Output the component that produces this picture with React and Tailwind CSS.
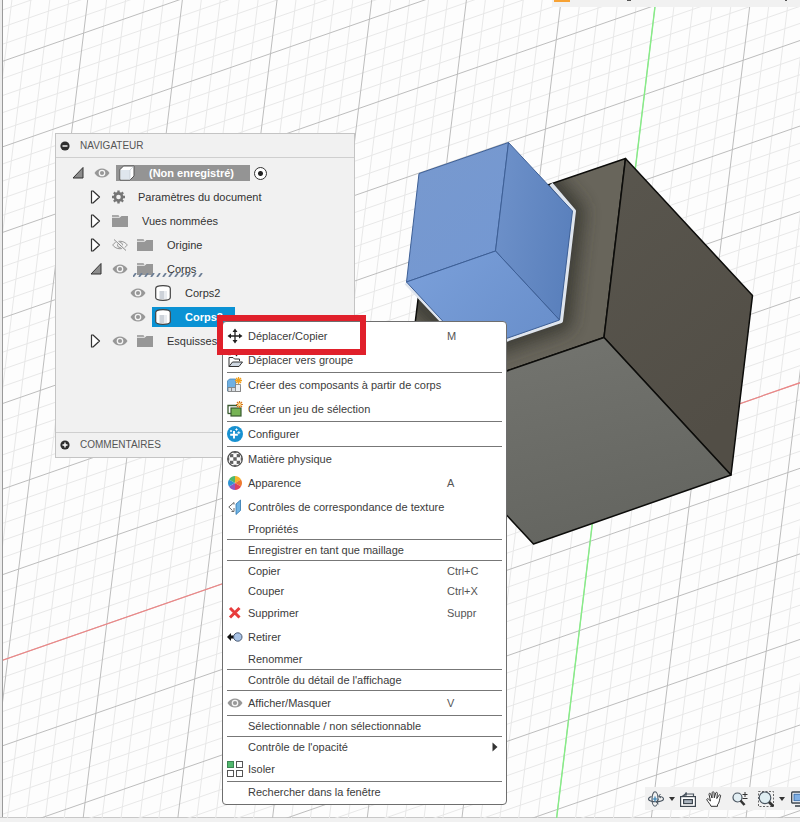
import React, { useState } from "react";

// Ground grid: origin plus the two directions of one large cell
const ORIGIN = [601, 452];
const U = [98.86, -34.4];
const V = [-10.83, 89.33];

const gridPoint = (a, b) => [
  ORIGIN[0] + a * U[0] + b * V[0],
  ORIGIN[1] + a * U[1] + b * V[1],
];

const gridLines = () => {
  const lines = [];
  for (let i = -100; i <= 100; i++) {
    const major = i % 5 === 0;
    const k = i / 5;
    lines.push({ key: `v${i}`, from: gridPoint(k, -20), to: gridPoint(k, 20), major });
    lines.push({ key: `u${i}`, from: gridPoint(-20, k), to: gridPoint(20, k), major });
  }
  return lines.sort((a, b) => a.major - b.major);
};

const Line = ({ from, to, ...rest }) => (
  <line x1={from[0]} y1={from[1]} x2={to[0]} y2={to[1]} {...rest} />
);

const Viewport = () => (
  <svg className="absolute inset-0 h-full w-full" aria-hidden="true">
    <defs>
      <linearGradient id="rightFace" x1="0" y1="0" x2="0.4" y2="1">
        <stop offset="0" stopColor="#59564e" />
        <stop offset="1" stopColor="#524e46" />
      </linearGradient>
      <linearGradient id="bottomFace" x1="0" y1="0" x2="0.4" y2="1">
        <stop offset="0" stopColor="#757671" />
        <stop offset="1" stopColor="#656661" />
      </linearGradient>
      <linearGradient id="blueLeft" x1="0" y1="0" x2="0.6" y2="1">
        <stop offset="0" stopColor="#7899ce" />
        <stop offset="1" stopColor="#7498d2" />
      </linearGradient>
      <linearGradient id="blueRight" x1="0" y1="0" x2="1" y2="0.3">
        <stop offset="0" stopColor="#6f92ca" />
        <stop offset="1" stopColor="#5b81bd" />
      </linearGradient>
      <linearGradient id="blueBottom" x1="0" y1="0" x2="1" y2="0.6">
        <stop offset="0" stopColor="#7ba0da" />
        <stop offset="1" stopColor="#6a90cc" />
      </linearGradient>
      <clipPath id="leftFaceClip">
        <polygon points="427,226 625.5,158.5 604,337.5 405,406" />
      </clipPath>
      <filter id="soften" x="-30%" y="-30%" width="160%" height="160%">
        <feGaussianBlur stdDeviation="8" />
      </filter>
    </defs>

    {gridLines().map(({ key, from, to, major }) => (
      <Line key={key} from={from} to={to} stroke={major ? "#bdbdbd" : "#e8e8e8"} strokeWidth="1" />
    ))}
    <Line from={gridPoint(-20, 0)} to={gridPoint(20, 0)} stroke="#ee8686" strokeWidth="1.2" />
    <Line from={gridPoint(0, -20)} to={gridPoint(0, 20)} stroke="#86ee86" strokeWidth="1.4" />

    {/* contact shadow of the small cube on the big one */}
    <polygon points="427,226 625.5,158.5 604,337.5 405,406" fill="#68655b" />
    <g clipPath="url(#leftFaceClip)">
      <polyline
        points="530,160 574,211 561,321 471,352 400,283"
        fill="none"
        stroke="#36342e"
        strokeWidth="22"
        strokeLinejoin="round"
        opacity="0.8"
        filter="url(#soften)"
      />
    </g>
    <g stroke="#0c0c0a" strokeWidth="1.5" strokeLinejoin="round">
      <polygon points="427,226 625.5,158.5 604,337.5 405,406" fill="none" />
      <polygon points="625.5,158.5 752.5,295.5 731,475 604,337.5" fill="url(#rightFace)" />
      <polygon points="604,337.5 731,475 533.5,544 405,406" fill="url(#bottomFace)" />
    </g>

    <polyline points="551,184 574,211 561,321 471,352 406,283" fill="none" stroke="#dfe5ee" strokeWidth="4" strokeLinejoin="round" />
    <g stroke="#3d5f96" strokeWidth="1" strokeLinejoin="round">
      <polygon points="419,173.5 508.5,142.5 495.5,251 406.5,282" fill="url(#blueLeft)" />
      <polygon points="508.5,142.5 572.5,211 559.5,320 495.5,251" fill="url(#blueRight)" />
      <polygon points="495.5,251 559.5,320 470.5,351 406.5,282" fill="url(#blueBottom)" />
    </g>
  </svg>
);

const Svg = ({ children, className = "h-4 w-4" }) => (
  <svg viewBox="0 0 16 16" className={`${className} block shrink-0`} fill="none" aria-hidden="true">
    {children}
  </svg>
);

const EyeIcon = () => (
  <Svg>
    <path d="M0.5 8C4 2 12 2 15.500 8C12 14 4 14 0.500 8Z" fill="#979797" />
    <circle cx="8" cy="8" r="2.700" stroke="#f4f4f4" strokeWidth="1.300" />
  </Svg>
);

const EyeOffIcon = () => (
  <Svg>
    <path d="M0.700 8C4 3 12 3 15.300 8C12 13 4 13 0.700 8Z" stroke="#979797" />
    <circle cx="8" cy="8" r="2.500" stroke="#979797" />
    <path d="M2.500 2.500L14 13.500" stroke="#f1f1f1" strokeWidth="2.500" />
    <path d="M2 2.500L14 13.500" stroke="#8a8a8a" />
  </Svg>
);

const FolderIcon = () => (
  <Svg>
    <path d="M0 2H6.500L7.500 4H0Z" fill="#a9a9a9" />
    <path d="M0 4.800H7.500L9.500 3H16V14H0Z" fill="#979797" />
  </Svg>
);

const GearIcon = () => (
  <Svg>
    <g transform="translate(6.500 8)">
      <circle r="3.600" stroke="#757575" strokeWidth="2.600" />
      <path d="M0 -6.500V-4M0 6.500V4M-6.500 0H-4M6.500 0H4M-4.600 -4.600L-3 -3M4.600 4.600L3 3M-4.600 4.600L-3 3M4.600 -4.600L3 -3" stroke="#757575" strokeWidth="2.400" />
    </g>
  </Svg>
);

const BoxIcon = () => (
  <Svg>
    <path d="M1 4.500L4.500 1H15V11L11 15H1Z" fill="#fff" stroke="#555" strokeLinejoin="round" />
    <path d="M1.500 5H11V14.500H1.500Z" fill="#dfe6ed" />
    <path d="M11 5V14.500M11 5L14.500 1.500" stroke="#c3cad1" strokeWidth="0.700" />
  </Svg>
);

const BodyIcon = () => (
  <Svg>
    <path d="M0.700 3.500C0.700 1.500 3 0.700 8 0.700S15.300 1.500 15.300 3.500V12.500C15.300 14.500 13 15.300 8 15.300S0.700 14.500 0.700 12.500Z" fill="#fff" stroke="#444" strokeWidth="1.200" />
    <path d="M4.500 6H9V14H4.500Z" fill="#cdd2d9" />
    <path d="M9 6H12V14H9Z" fill="#e9ecf0" />
  </Svg>
);

const Arrow = ({ open }) => (
  <svg viewBox="0 0 12 14" className="block h-3.5 w-3 shrink-0" fill="none" aria-hidden="true">
    {open ? (
      <path d="M11 1.500V12H1Z" fill="#8c8c8c" stroke="#333" strokeLinejoin="round" />
    ) : (
      <path d="M1.500 1V13H3L9.500 7L3 1Z" fill="#fff" stroke="#333" strokeWidth="1.200" strokeLinejoin="round" />
    )}
  </svg>
);

const treeIcons = { gear: GearIcon, folder: FolderIcon, box: BoxIcon, body: BodyIcon };

const treeItems = [
  { label: "(Non enregistré)", icon: "box", arrow: "open", eye: "on", root: true, indent: "pl-4" },
  { label: "Paramètres du document", icon: "gear", arrow: "closed", indent: "pl-[34px]" },
  { label: "Vues nommées", icon: "folder", arrow: "closed", indent: "pl-[34px]" },
  { label: "Origine", icon: "folder", arrow: "closed", eye: "off", indent: "pl-[34px]" },
  { label: "Corps", icon: "folder", arrow: "open", eye: "on", hatched: true, indent: "pl-[34px]" },
  { label: "Corps2", icon: "body", eye: "on", indent: "pl-[74px]" },
  { label: "Corps3", icon: "body", eye: "on", indent: "pl-[74px]" },
  { label: "Esquisses", icon: "folder", arrow: "closed", eye: "on", indent: "pl-[34px]" },
];

const TreeRow = ({ item, selected, onSelect }) => {
  const Icon = treeIcons[item.icon];
  let look = "h-5";
  if (item.root) look = "h-4 bg-[#949494] pr-4 font-bold text-white";
  if (selected) look = "h-5 bg-[#0a92d4] pr-3 font-bold text-white";

  return (
    <li className={`flex h-6 items-center ${item.indent}`}>
      {item.arrow && (
        <button aria-label={`Développer ${item.label}`} className={item.eye ? "mr-2.5" : "mr-[7px]"}>
          <Arrow open={item.arrow === "open"} />
        </button>
      )}
      {item.eye && (
        <button aria-label={`Visibilité ${item.label}`} className="mr-1.5">
          {item.eye === "on" ? <EyeIcon /> : <EyeOffIcon />}
        </button>
      )}
      <button
        onClick={onSelect}
        className={`relative flex items-center whitespace-nowrap pl-[3px] ${item.icon === "gear" ? "gap-2.5" : "gap-3.5"} ${look}`}
      >
        <Icon />
        {item.label}
        {item.hatched && (
          <svg className="absolute bottom-0.5 -left-px h-1 w-[71px]" aria-hidden="true">
            <path
              d="M0 4l3-4M6 4l3-4M12 4l3-4M18 4l3-4M24 4l3-4M30 4l3-4M36 4l3-4M42 4l3-4M48 4l3-4M54 4l3-4M60 4l3-4M66 4l3-4"
              stroke="#6d7f97"
              strokeWidth="1.8"
            />
          </svg>
        )}
      </button>
      {item.root && (
        <input
          type="radio"
          defaultChecked
          aria-label="Activer le composant"
          className="ml-1 h-[13px] w-[13px] appearance-none rounded-full border border-[#333] bg-[radial-gradient(circle,#222_2px,#fff_3px)]"
        />
      )}
    </li>
  );
};

const PanelToggle = ({ plus }) => (
  <svg viewBox="0 0 10 10" className="h-2.5 w-2.5 shrink-0" aria-hidden="true">
    <circle cx="5" cy="5" r="4.600" fill="#2e2e2e" />
    <path d={plus ? "M2.500 5H7.500M5 2.500V7.500" : "M2.500 5H7.500"} stroke="#fff" strokeWidth="1.400" />
  </svg>
);

const Navigator = () => {
  const [selected, setSelected] = useState("Corps3");
  return (
    <section className="absolute left-[55px] top-[133px] w-[300px] border border-[#c4c4c4] bg-[#f1f1f1]">
      <button className="flex h-6 w-full items-center gap-2.5 border-b border-[#cfcfcf] pl-1 text-[10px] text-[#555]">
        <PanelToggle />
        NAVIGATEUR
      </button>
      <ul className="h-[274px] pt-[3px]">
        {treeItems.map((item) => (
          <TreeRow
            key={item.label}
            item={item}
            selected={item.label === selected}
            onSelect={() => setSelected(item.label)}
          />
        ))}
      </ul>
      <button className="flex h-[25px] w-full items-center gap-2.5 border-t border-[#cfcfcf] pl-1 text-[10px] text-[#555]">
        <PanelToggle plus />
        COMMENTAIRES
      </button>
    </section>
  );
};

const menuIcons = {
  move: (
    <Svg>
      <path d="M8 2.500V13.500M2.500 8H13.500" stroke="#222" strokeWidth="1.300" />
      <path d="M8 0.500L10.500 4H5.500ZM8 15.500L10.500 12H5.500ZM0.500 8L4 5.500V10.500ZM15.500 8L12 5.500V10.500Z" fill="#222" />
    </Svg>
  ),
  group: (
    <Svg>
      <path d="M2 14.500V5.500H6L7.500 7H12.500V9" fill="#fff" stroke="#333" />
      <path d="M2 14.500L5.500 10H15.500L12 14.500Z" fill="#cfd8e2" stroke="#333" strokeLinejoin="round" />
      <path d="M1 2.500H4" stroke="#e0452c" strokeWidth="1.500" />
      <path d="M9.500 4.500L8 2.500H11Z" fill="#222" />
    </Svg>
  ),
  component: (
    <Svg>
      <path d="M0.500 4L2.500 2H8.500V14H0.500Z" fill="#6fb0e2" stroke="#4785b8" strokeWidth="0.800" />
      <path d="M1 10.500H13.500V14.500H1Z" fill="#d8dde2" stroke="#777" strokeWidth="0.800" />
      <path d="M8.500 7.500H13.500V14.500H8.500Z" fill="#eceff2" stroke="#777" strokeWidth="0.800" />
      <path d="M4.500 10.500V14.500" stroke="#888" />
      <path d="M11.500 0V7M8 3.500H15M9 1L14 6M14 1L9 6" stroke="#f0a01e" strokeWidth="1.300" />
    </Svg>
  ),
  selectionSet: (
    <Svg>
      <path d="M1 12V4.500H10" stroke="#3a5a30" strokeWidth="1.300" />
      <path d="M0.500 12.500H4" stroke="#3a5a30" strokeWidth="1.300" />
      <rect x="4" y="7" width="10" height="8" fill="#76b354" stroke="#3a5a30" strokeWidth="1.200" />
      <path d="M12.500 0V7M9 3.500H16M10 1L15 6M15 1L10 6" stroke="#d8781c" strokeWidth="1.200" />
      <circle cx="12.500" cy="3.500" r="1.500" fill="#ffe08a" />
    </Svg>
  ),
  configure: (
    <Svg>
      <circle cx="8" cy="8" r="8" fill="#1891d1" />
      <path d="M7 5V12.500M3.200 8.800H10.800" stroke="#fff" strokeWidth="1.900" />
      <path d="M11.800 5.200V8.200M10.300 6.700H13.300M9.500 2.300V4.700M8.300 3.500H10.700M4 4V6M3 5H5" stroke="#fff" strokeWidth="0.900" />
    </Svg>
  ),
  material: (
    <Svg>
      <circle cx="8" cy="8" r="7.300" fill="#fff" stroke="#4a4a4a" strokeWidth="1.200" />
      <path d="M6.300 6.300H9.700V9.700H6.300ZM3 3.300L6.300 2.900V6.300L2.900 6.300ZM13 3.300L9.700 2.900V6.300L13.100 6.300ZM3 12.700L6.300 13.100V9.700L2.900 9.700ZM13 12.700L9.700 13.100V9.700L13.100 9.700Z" fill="#606060" />
      <path d="M6.300 1H9.700L9.500 2.300H6.500ZM6.300 15H9.700L9.500 13.700H6.500ZM1 6.300V9.700L2.300 9.500V6.500ZM15 6.300V9.700L13.700 9.500V6.500Z" fill="#606060" />
    </Svg>
  ),
  appearance: (
    <Svg>
      <path d="M8 8L8 1A7 7 0 0 1 14 4.500Z" fill="#f6b52c" />
      <path d="M8 8L14 4.500A7 7 0 0 1 14 11.500Z" fill="#ee7a30" />
      <path d="M8 8L14 11.500A7 7 0 0 1 8 15Z" fill="#e0405c" />
      <path d="M8 8L8 15A7 7 0 0 1 2 11.500Z" fill="#8f59c4" />
      <path d="M8 8L2 11.500A7 7 0 0 1 2 4.500Z" fill="#2f94d4" />
      <path d="M8 8L2 4.500A7 7 0 0 1 8 1Z" fill="#4eb86c" />
    </Svg>
  ),
  texture: (
    <Svg>
      <path d="M9 5L13.500 1V11.500L9 15.500Z" fill="#6fb3e4" stroke="#2e76ad" strokeWidth="0.800" />
      <path d="M7 3.500L1.800 8L5.500 11.500M7 3.500V5.500M7 9V12.500H4.500" stroke="#666" />
    </Svg>
  ),
  remove: (
    <Svg>
      <path d="M3 3L12.500 12.500M12.500 3L3 12.500" stroke="#e83c3c" strokeWidth="3" />
    </Svg>
  ),
  withdraw: (
    <Svg>
      <path d="M0 8L4 4V6.500H8V9.500H4V12Z" fill="#111" />
      <circle cx="10.800" cy="8" r="4.200" fill="#a9c3e6" stroke="#4a5a72" />
    </Svg>
  ),
  eye: <EyeIcon />,
  isolate: (
    <Svg>
      <rect x="0.500" y="0.500" width="6" height="6" fill="#52b96e" stroke="#3b8652" />
      <rect x="9.500" y="0.500" width="6" height="6" fill="#fff" stroke="#555" />
      <rect x="0.500" y="9.500" width="6" height="6" fill="#fff" stroke="#555" />
      <rect x="9.500" y="9.500" width="6" height="6" fill="#fff" stroke="#555" />
    </Svg>
  ),
};

const menuGroups = [
  [
    { label: "Déplacer/Copier", icon: "move", shortcut: "M" },
    { label: "Déplacer vers groupe", icon: "group" },
  ],
  [
    { label: "Créer des composants à partir de corps", icon: "component" },
    { label: "Créer un jeu de sélection", icon: "selectionSet" },
  ],
  [{ label: "Configurer", icon: "configure" }],
  [
    { label: "Matière physique", icon: "material" },
    { label: "Apparence", icon: "appearance", shortcut: "A" },
    { label: "Contrôles de correspondance de texture", icon: "texture" },
    { label: "Propriétés" },
  ],
  [{ label: "Enregistrer en tant que maillage" }],
  [
    { label: "Copier", shortcut: "Ctrl+C" },
    { label: "Couper", shortcut: "Ctrl+X" },
    { label: "Supprimer", icon: "remove", shortcut: "Suppr" },
    { label: "Retirer", icon: "withdraw" },
    { label: "Renommer" },
  ],
  [{ label: "Contrôle du détail de l'affichage" }],
  [{ label: "Afficher/Masquer", icon: "eye", shortcut: "V" }],
  [{ label: "Sélectionnable / non sélectionnable" }],
  [{ label: "Contrôle de l'opacité", submenu: true }, { label: "Isoler", icon: "isolate" }],
  [{ label: "Rechercher dans la fenêtre" }],
];

const ContextMenu = () => (
  <div
    role="menu"
    className="absolute left-[222px] top-[321px] w-[285px] divide-y divide-[#777] rounded-sm border border-[#6e6e6e] bg-white px-1 py-0.5 text-[#3c3c3c]"
  >
    {menuGroups.map((group) => (
      <div key={group[0].label} role="group">
        {group.map((item) => (
          <button
            key={item.label}
            role="menuitem"
            className={`flex w-full items-center whitespace-nowrap text-left hover:bg-sky-100 ${item.icon ? "h-6" : "h-5"}`}
          >
            <span className="mr-[5px] w-4 shrink-0">{item.icon && menuIcons[item.icon]}</span>
            <span className="flex-1">{item.label}</span>
            {item.shortcut && <span className="w-[55px] text-[#555]">{item.shortcut}</span>}
            {item.submenu && (
              <svg viewBox="0 0 6 10" className="mr-1 h-2.5 w-1.5" aria-hidden="true">
                <path d="M0.500 0.500L5.500 5L0.500 9.500Z" fill="#333" />
              </svg>
            )}
          </button>
        ))}
      </div>
    ))}
  </div>
);

const Caret = () => (
  <svg viewBox="0 0 6 4" className="h-1 w-1.5 shrink-0" aria-hidden="true">
    <path d="M0 0H6L3 4Z" fill="#333" />
  </svg>
);

const ViewToolbar = () => (
  <div className="absolute bottom-3 right-0 flex h-[23px] w-[155px] items-center overflow-hidden bg-[#f1f1f1] pl-[3px]">
    <button aria-label="Orbite" className="mr-[5px] flex items-center gap-[5px]">
      <Svg>
        <ellipse cx="7" cy="8" rx="3" ry="7.200" stroke="#4a5560" strokeWidth="1.100" />
        <path d="M3.500 5.500C1 6.300 0.500 7.300 0.500 8C0.500 9.500 4 10.800 8 10.800S15.500 9.500 15.500 8C15.500 7 14 5.700 11 5.300" stroke="#4a5560" strokeWidth="1.100" />
        <path d="M10.500 8.500L8 10.800L10.500 13" stroke="#4a5560" />
        <path d="M7 5.500V10.500M4.500 8H9.500" stroke="#2f7fb5" strokeWidth="1.200" />
        <path d="M12.500 3L10.500 5.300L13 7" stroke="#4a5560" />
      </Svg>
      <Caret />
    </button>
    <button aria-label="Regarder" className="mr-2.5">
      <Svg>
        <path d="M2 5.500L6 3V1.500M6 3H13.500V5" stroke="#4a5560" strokeWidth="1.200" />
        <path d="M2.500 5L6.500 1L7 4.500Z" fill="#4a5560" />
        <rect x="0.600" y="5.600" width="14.800" height="9.800" fill="#fff" stroke="#3e4750" strokeWidth="1.200" />
        <rect x="3.600" y="8.600" width="8.800" height="4" fill="#aab4bf" stroke="#3e4750" strokeWidth="1.200" />
      </Svg>
    </button>
    <button aria-label="Panoramique" className="mr-2.5">
      <Svg>
        <path
          d="M5 15.300C4.500 13.500 2 11 0.800 8.800C0.600 7.700 1.800 7.300 2.500 8.200L4.500 10L3 3.300C2.900 2.100 4.300 1.900 4.700 3L6 7L6.200 1.600C6.400 0.400 7.800 0.400 8 1.600L8.300 6.800L9.700 2C10 1 11.500 1.200 11.400 2.400L10.800 7.500L13 4.200C13.700 3.300 14.900 3.900 14.500 5C13.500 8 13.500 12 11.500 13.800V15.300Z"
          fill="#fff"
          stroke="#333"
          strokeLinejoin="round"
        />
      </Svg>
    </button>
    <button aria-label="Zoom" className="mr-2.5">
      <Svg>
        <circle cx="5.500" cy="6.500" r="4.500" fill="#e2eef3" stroke="#4a5560" strokeWidth="1.200" />
        <path d="M8.500 9.500L12.500 14" stroke="#333" strokeWidth="2.600" />
        <path d="M13 1V6M10.500 3.500H15.500M10.500 7.500H15.500" stroke="#333" />
      </Svg>
    </button>
    <button aria-label="Fenêtre de zoom" className="mr-1.5 flex items-center gap-[5px]">
      <Svg>
        <rect x="0.500" y="0.500" width="15" height="15" stroke="#666" strokeDasharray="2 1.500" />
        <circle cx="7" cy="6.800" r="5.800" fill="#dfeef2" stroke="#4a5560" strokeWidth="1.200" />
        <path d="M11 11L15.500 15.500" stroke="#333" strokeWidth="2.800" />
      </Svg>
      <Caret />
    </button>
    <button aria-label="Affichage">
      <Svg>
        <rect x="0.700" y="1" width="16" height="11" rx="1" fill="#fff" stroke="#3e4750" strokeWidth="1.400" />
        <rect x="3" y="3.200" width="13" height="6.500" fill="#7fb0e6" stroke="#3d6ea8" />
        <path d="M4 15H14" stroke="#3e4750" strokeWidth="1.600" />
      </Svg>
    </button>
  </div>
);

export default function App() {
  return (
    <div className="relative flex min-h-screen flex-col overflow-hidden bg-[#fdfdfd] font-['Liberation_Sans',Arial,sans-serif] text-[11px] leading-4 text-[#333]">
      <main className="flex flex-1 border-b border-[#c8c8c8]">
        <Viewport />
        <div className="relative w-[3px] border-r border-[#9a9a9a] bg-[#ececec]" />
      </main>
      <footer className="relative h-1 bg-[#f1f1f1]" />

      <div className="absolute left-[552px] right-0 top-0 h-[7px] bg-[#f1f1f1]">
        <svg className="h-full w-full" aria-hidden="true">
          <path d="M2 0H18V2H2Z" fill="#f7a234" />
          <path d="M75 0.500H79M233 0.500H235" stroke="#555" />
        </svg>
      </div>

      <Navigator />
      <ViewToolbar />
      <ContextMenu />
      <div className="pointer-events-none absolute left-[217px] top-[315px] h-10 w-[149px] border-[6px] border-[#e0202b]" />
    </div>
  );
}
